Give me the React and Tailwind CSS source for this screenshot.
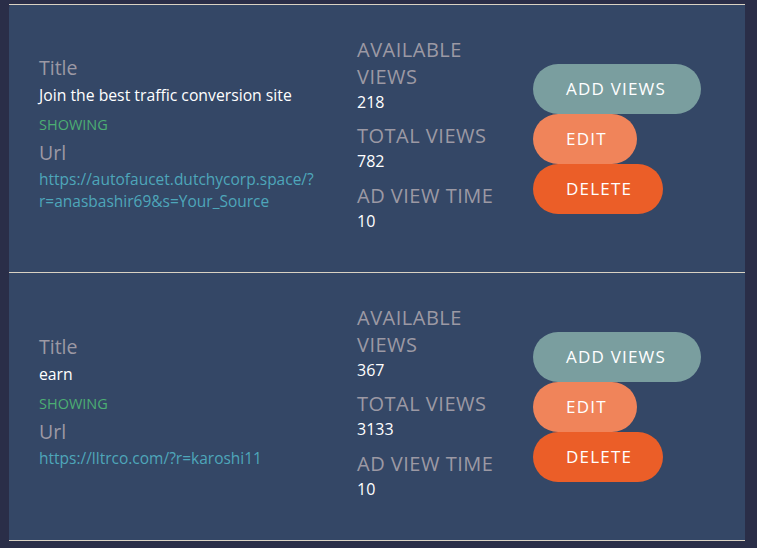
import React from "react";

const ads = [
  {
    title: "Join the best traffic conversion site",
    url: "https://autofaucet.dutchycorp.space/?r=anasbashir69&s=Your_Source",
    available: 218,
    total: 782,
    time: 10,
  },
  {
    title: "earn",
    url: "https://lltrco.com/?r=karoshi11",
    available: 367,
    total: 3133,
    time: 10,
  },
];

const AdCard = ({ ad }) => {
  return (
    <div className="flex items-center h-[268px] border-t border-[#d9d2c3] pl-[30px]">
      <div className="w-[318px] pr-4 flex flex-col mb-[10px]">
        <h4 className="text-[19.5px] leading-[26px] text-[#9c99a4]">Title</h4>
        <p className="text-[15.75px] leading-[22px] text-white mt-[3px]">{ad.title}</p>
        <p className="text-[14.5px] leading-[20px] text-[#4cae73] mt-[9px]">SHOWING</p>
        <h4 className="text-[19.5px] leading-[26px] text-[#9c99a4] mt-[5px]">Url</h4>
        <a className="text-[15.5px] leading-[21.5px] text-[#4ea6ba] break-words mt-[3px]">{ad.url}</a>
      </div>
      <div className="w-[176px] flex flex-col mb-[9px]">
        <span className="text-[20px] leading-[27px] tracking-[0.5px] text-[#9c99a4] w-[150px]">AVAILABLE VIEWS</span>
        <span className="text-[16px] leading-[24px] text-white">{ad.available}</span>
        <span className="text-[20px] leading-[27px] tracking-[0.5px] text-[#9c99a4] mt-[8px]">TOTAL VIEWS</span>
        <span className="text-[16px] leading-[24px] text-white">{ad.total}</span>
        <span className="text-[20px] leading-[27px] tracking-[0.5px] text-[#9c99a4] mt-[9px]">AD VIEW TIME</span>
        <span className="text-[16px] leading-[24px] text-white">{ad.time}</span>
      </div>
      <div className="flex flex-col items-start">
        <button className="h-[50px] w-[168px] rounded-full bg-[#7a9e9f] text-white text-[17px] tracking-[1.2px] text-left pl-[33px]">
          ADD VIEWS
        </button>
        <button className="h-[50px] w-[104px] rounded-full bg-[#f0845a] text-white text-[17px] tracking-[1.2px] text-left pl-[33px]">
          EDIT
        </button>
        <button className="h-[50px] w-[130px] rounded-full bg-[#eb5e28] text-white text-[17px] tracking-[1.2px] text-left pl-[33px]">
          DELETE
        </button>
      </div>
    </div>
  );
};

export default function App() {
  return (
    <div className="min-h-[548px] bg-[#2a2e48] pt-[4px] pl-[9px] pr-[12px] font-['Open_Sans',sans-serif]">
      <div className="bg-[#344766] rounded-tl-[4px] border-b border-[#d9d2c3]">
        {ads.map((ad, i) => (
          <AdCard key={i} ad={ad} />
        ))}
      </div>
    </div>
  );
}
